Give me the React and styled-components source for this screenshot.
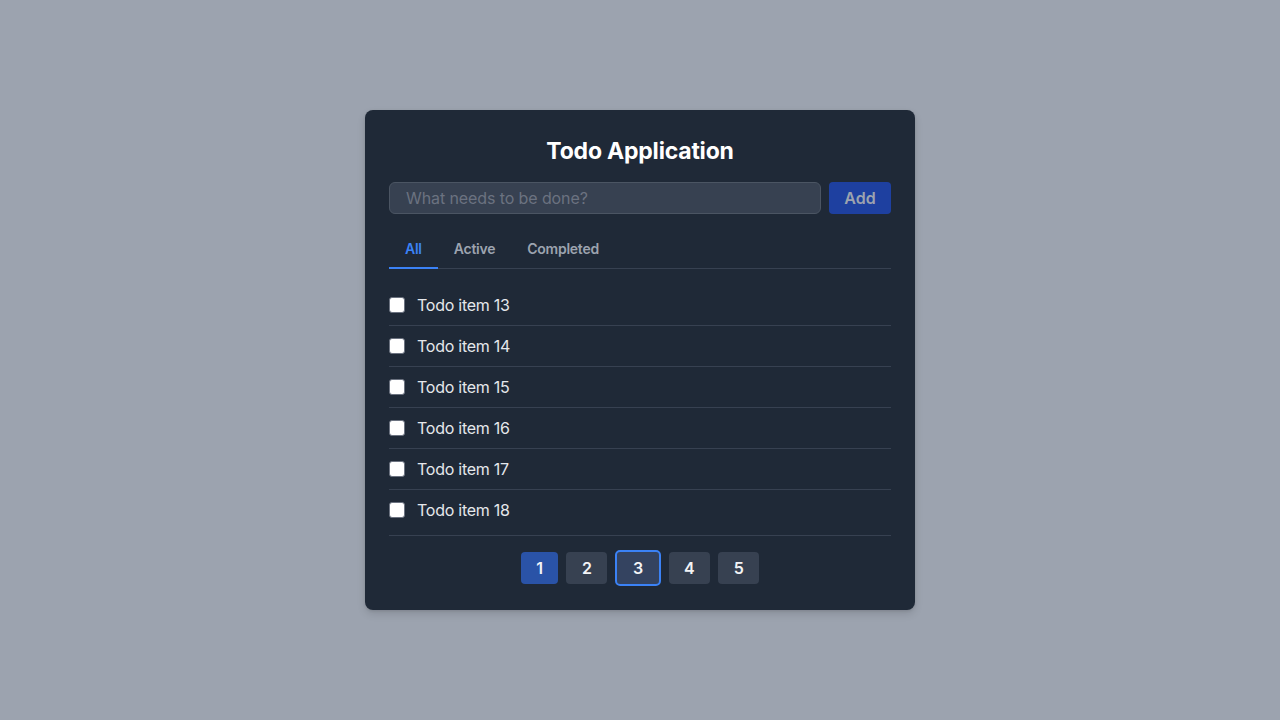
import { useState } from 'react';
import styled, { createGlobalStyle } from 'styled-components';

const GlobalStyle = createGlobalStyle`
  html, body {
    margin: 0;
    padding: 0;
    background: #9ca3af;
    font-family: Inter, "Noto Sans", "Liberation Sans", sans-serif;
  }
`;

const Page = styled.div`
  width: 1280px;
  height: 720px;
  box-sizing: border-box;
  padding-top: 110px;
  display: flex;
  align-items: flex-start;
  justify-content: center;
`;

const Card = styled.div`
  width: 550px;
  box-sizing: border-box;
  padding: 25px 24px 24px;
  background: #1f2937;
  border-radius: 8px;
  box-shadow: 0 4px 8px rgba(0, 0, 0, 0.12), 0 1px 3px rgba(0, 0, 0, 0.1);
`;

const Title = styled.h1`
  margin: 0 0 15px;
  font-size: 23px;
  line-height: 32px;
  font-weight: 700;
  color: #ffffff;
  text-align: center;
  letter-spacing: -0.2px;
`;

const AddForm = styled.form`
  display: flex;
  gap: 8px;
`;

const TextInput = styled.input`
  flex: 1;
  height: 32px;
  box-sizing: border-box;
  padding: 0 16px;
  background: #374151;
  border: 1px solid #4b5563;
  border-radius: 6px;
  color: #f3f4f6;
  font-family: inherit;
  font-size: 16px;
  letter-spacing: -0.1px;
  outline: none;

  &::placeholder {
    color: #6b7280;
  }
`;

const AddButton = styled.button`
  width: 62px;
  height: 32px;
  border: none;
  border-radius: 4px;
  background: #1e40a0;
  color: #9ca3af;
  font-family: inherit;
  font-size: 16px;
  font-weight: 600;
  cursor: pointer;
`;

const Tabs = styled.div`
  display: flex;
  margin-top: 17px;
  border-bottom: 1px solid #374151;
`;

const Tab = styled.button`
  padding: 8px 16px;
  margin-bottom: -1px;
  background: none;
  border: none;
  border-bottom: 2px solid ${p => (p.$active ? '#3b82f6' : 'transparent')};
  color: ${p => (p.$active ? '#3b82f6' : '#9ca3af')};
  font-family: inherit;
  font-size: 14px;
  line-height: 20px;
  font-weight: 600;
  letter-spacing: -0.25px;
  cursor: pointer;
`;

const List = styled.ul`
  list-style: none;
  margin: 16px 0 0;
  padding: 0 0 5px;
  border-bottom: 1px solid #374151;
`;

const Row = styled.li`
  display: flex;
  align-items: center;
  gap: 12px;
  height: 40px;
  border-bottom: 1px solid #374151;

  &:last-child {
    border-bottom: none;
  }
`;

const Check = styled.input`
  appearance: none;
  width: 16px;
  height: 16px;
  margin: 0;
  background: #ffffff;
  border: 1px solid #6b7280;
  border-radius: 3px;
  cursor: pointer;

  &:checked {
    background: #3b82f6;
    border-color: #3b82f6;
  }
`;

const ItemText = styled.span`
  font-size: 16px;
  line-height: 24px;
  letter-spacing: -0.25px;
  color: ${p => (p.$done ? '#6b7280' : '#e5e7eb')};
  text-decoration: ${p => (p.$done ? 'line-through' : 'none')};
`;

const Pager = styled.div`
  display: flex;
  justify-content: center;
  align-items: center;
  gap: 8px;
  height: 36px;
  padding-top: 14px;
`;

const PageButton = styled.button`
  height: ${p => (p.$focused ? '36px' : '32px')};
  padding: 0 15.5px;
  box-sizing: border-box;
  border: ${p => (p.$focused ? '2px solid #3b82f6' : 'none')};
  border-radius: ${p => (p.$focused ? '5px' : '4px')};
  background: ${p => (p.$current ? '#2a53a7' : p.$focused ? '#344360' : '#374151')};
  color: #f3f4f6;
  font-family: inherit;
  font-size: 16px;
  font-weight: 600;
  cursor: pointer;
`;

const todos = [13, 14, 15, 16, 17, 18].map(n => ({ id: n, text: `Todo item ${n}`, done: false }));

export default function App() {
  const [filter, setFilter] = useState('All');
  const [items, setItems] = useState(todos);
  const [text, setText] = useState('');

  const toggle = id =>
    setItems(list => list.map(t => (t.id === id ? { ...t, done: !t.done } : t)));

  return (
    <>
      <GlobalStyle />
      <Page>
        <Card>
          <Title>Todo Application</Title>
          <AddForm onSubmit={e => e.preventDefault()}>
            <TextInput
              value={text}
              onChange={e => setText(e.target.value)}
              placeholder="What needs to be done?"
            />
            <AddButton type="submit">Add</AddButton>
          </AddForm>
          <Tabs>
            {['All', 'Active', 'Completed'].map(name => (
              <Tab key={name} $active={filter === name} onClick={() => setFilter(name)}>
                {name}
              </Tab>
            ))}
          </Tabs>
          <List>
            {items.map(t => (
              <Row key={t.id}>
                <Check type="checkbox" checked={t.done} onChange={() => toggle(t.id)} />
                <ItemText $done={t.done}>{t.text}</ItemText>
              </Row>
            ))}
          </List>
          <Pager>
            {[1, 2, 3, 4, 5].map(n => (
              <PageButton key={n} $current={n === 1} $focused={n === 3}>
                {n}
              </PageButton>
            ))}
          </Pager>
        </Card>
      </Page>
    </>
  );
}
